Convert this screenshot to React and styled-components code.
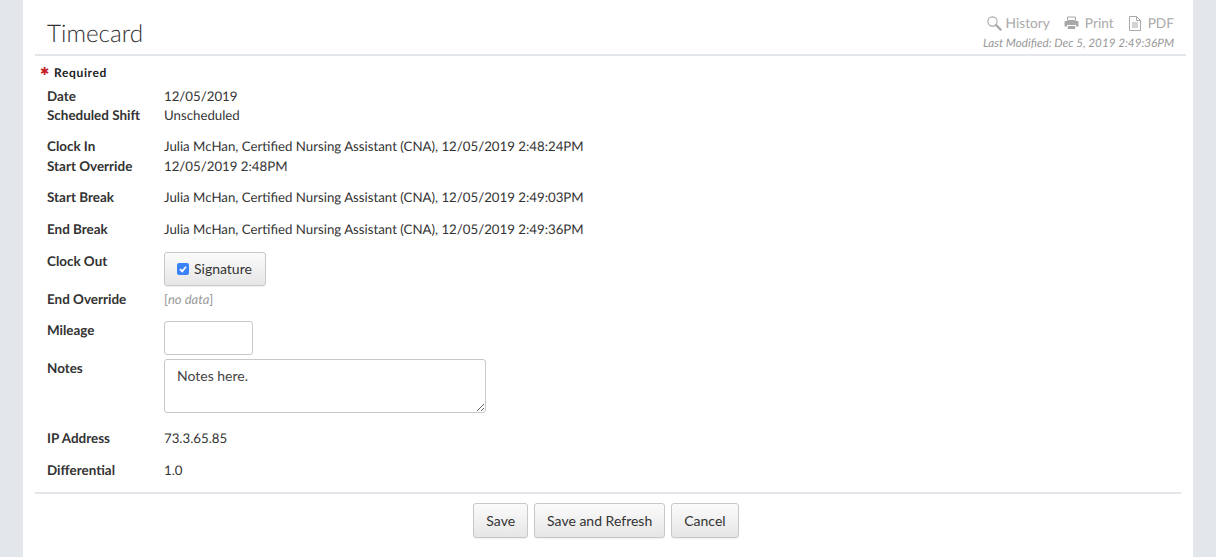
import React from "react";
import styled, { createGlobalStyle } from "styled-components";

const Global = createGlobalStyle`
  html, body { margin: 0; padding: 0; background: #e3e7ec; }
  body { font-family: Lato, "Liberation Sans", sans-serif; font-size: 13.25px; color: #333; text-rendering: geometricPrecision; }
`;
const Panel = styled.main`
  width: 1170px; height: 557px; margin-left: 23px; background: #fff; overflow: hidden;
  box-sizing: border-box; padding: 0 12px;
`;
const Header = styled.header`
  height: 56px; box-sizing: border-box; border-bottom: 2px solid #e3e7ec;
  display: flex; justify-content: space-between; padding: 0 12px; margin-right: -5px;
`;
const Title = styled.h1`
  margin: 18px 0 0; font-size: 24.25px; line-height: 32px; font-weight: 300; color: #333;
`;
const Tools = styled.div`
  display: flex; flex-direction: column; align-items: flex-end; padding-top: 14px;
`;
const ToolRow = styled.div`
  display: flex; height: 18px; align-items: center;
`;
const Tool = styled.span`
  display: flex; align-items: center; gap: ${(p) => p.$gap}px; margin-left: ${(p) => p.$left}px;
  font-size: 13.7px; color: #a8a8a8; line-height: 18px;
  svg { flex: none; }
`;
const Modified = styled.div`
  font-size: 11.7px; font-style: italic; color: #999; line-height: 14px; margin-top: 4px;
`;
const Required = styled.div`
  display: flex; align-items: center; height: 14px; margin-top: 9px; padding-left: 5px;
  font-size: 12px; font-weight: 700; letter-spacing: 0.65px; color: #222;
`;
const Star = styled.span`
  color: #c8202a; font-size: 11px; width: 14px; font-family: "DejaVu Sans", sans-serif; line-height: 14px;
  letter-spacing: 0;
`;
const Rows = styled.div`
  padding-left: 12px;
`;
const Row = styled.div`
  display: grid; grid-template-columns: 117px 1fr; align-items: start;
  margin-top: ${(p) => p.$top}px; min-height: 20px; line-height: 20px;
`;
const Label = styled.div`
  font-size: 13.45px; font-weight: 700; color: #333; margin-top: ${(p) => (p.$control ? -1 : 0)}px;
`;
const Value = styled.div`
  color: #333;
`;
const NoData = styled.span`
  font-size: 13px; color: #999; i { font-style: italic; }
`;
const Button = styled.button`
  font: inherit; font-size: 14px; color: #333; box-sizing: border-box; height: 35px;
  padding: 0 12px; border: 1px solid #c8c8c8; border-radius: 3px; cursor: pointer;
  background: linear-gradient(#fbfbfb, #e6e6e6);
  box-shadow: 0 1px 1px rgba(0,0,0,.06);
  display: inline-flex; align-items: center;
`;
const SigButton = styled(Button)`
  width: 102px; height: 34px; padding: 0 0 0 12px; gap: 5px;
`;
const Check = styled.span`
  width: 12px; height: 12px; border-radius: 2px; background: #3a82f7;
  display: inline-flex; align-items: center; justify-content: center;
`;
const MileageInput = styled.input`
  width: 89px; height: 34px; box-sizing: border-box; border: 1px solid #c8c8c8; border-radius: 3px;
  padding: 0 12px; font: inherit; display: block; background: #fff;
`;
const Notes = styled.textarea`
  width: 322px; height: 54px; box-sizing: border-box; border: 1px solid #c8c8c8; border-radius: 3px;
  padding: 7px 12px; font: inherit; font-size: 14px; line-height: 18px; color: #444; display: block; resize: vertical; margin: 0;
`;
const Footer = styled.footer`
  margin-top: 12px; border-top: 2px solid #e3e7ec; display: flex; justify-content: center;
  gap: 6px; padding: 9px 4px 0 0;
`;

const Search = () => (
  <svg width="15" height="15" viewBox="0 0 15 15" fill="none" stroke="#a8a8a8">
    <circle cx="5.5" cy="5.5" r="4.6" strokeWidth="1.1" />
    <path d="M9 9 L13.6 13.6" strokeWidth="2.2" strokeLinecap="round" />
  </svg>
);
const Printer = () => (
  <svg width="15" height="14" viewBox="0 0 15 14" fill="#a8a8a8">
    <path d="M3.5 1h8v3.5h-8z" fill="none" stroke="#a8a8a8" />
    <path d="M1.5 5h12a1 1 0 0 1 1 1v4.5h-2.5V9H3v1.5H.5V6a1 1 0 0 1 1-1z" />
    <path d="M3.8 10h7.4v3H3.8z" />
  </svg>
);
const Doc = () => (
  <svg width="12" height="15" viewBox="0 0 12 15" fill="none" stroke="#a8a8a8">
    <path d="M.5.5h7l4 4v10H.5z" />
    <path d="M7.5.5v4h4M3 7h6M3 9h6M3 11h6" />
  </svg>
);
const Tick = () => (
  <svg width="10" height="10" viewBox="0 0 10 10" fill="none" stroke="#fff" strokeWidth="1.7">
    <path d="M2 5.2 L4.2 7.4 L8 2.8" />
  </svg>
);

const clock = (t) => `Julia McHan, Certified Nursing Assistant (CNA), 12/05/2019 ${t}`;

export default function App() {
  return (
    <>
      <Global />
      <Panel>
        <Header>
          <Title>Timecard</Title>
          <Tools>
            <ToolRow>
              <Tool $gap={4} $left={0}><Search />History</Tool>
              <Tool $gap={6} $left={14}><Printer />Print</Tool>
              <Tool $gap={7} $left={15}><Doc />PDF</Tool>
            </ToolRow>
            <Modified>Last Modified: Dec 5, 2019 2:49:36PM</Modified>
          </Tools>
        </Header>
        <Required><Star>✱</Star>Required</Required>
        <Rows>
          <Row $top={7}><Label>Date</Label><Value>12/05/2019</Value></Row>
          <Row $top={-1}><Label>Scheduled Shift</Label><Value>Unscheduled</Value></Row>
          <Row $top={11}><Label>Clock In</Label><Value>{clock("2:48:24PM")}</Value></Row>
          <Row $top={0}><Label>Start Override</Label><Value>12/05/2019 2:48PM</Value></Row>
          <Row $top={11}><Label>Start Break</Label><Value>{clock("2:49:03PM")}</Value></Row>
          <Row $top={12}><Label>End Break</Label><Value>{clock("2:49:36PM")}</Value></Row>
          <Row $top={13}>
            <Label $control>Clock Out</Label>
            <Value><SigButton><Check><Tick /></Check>Signature</SigButton></Value>
          </Row>
          <Row $top={3}><Label>End Override</Label><Value><NoData>[<i>no data</i>]</NoData></Value></Row>
          <Row $top={12}><Label $control>Mileage</Label><Value><MileageInput /></Value></Row>
          <Row $top={4}><Label $control>Notes</Label><Value><Notes defaultValue="Notes here." /></Value></Row>
          <Row $top={15}><Label>IP Address</Label><Value>73.3.65.85</Value></Row>
          <Row $top={12}><Label>Differential</Label><Value>1.0</Value></Row>
        </Rows>
        <Footer>
          <Button>Save</Button>
          <Button>Save and Refresh</Button>
          <Button>Cancel</Button>
        </Footer>
      </Panel>
    </>
  );
}
